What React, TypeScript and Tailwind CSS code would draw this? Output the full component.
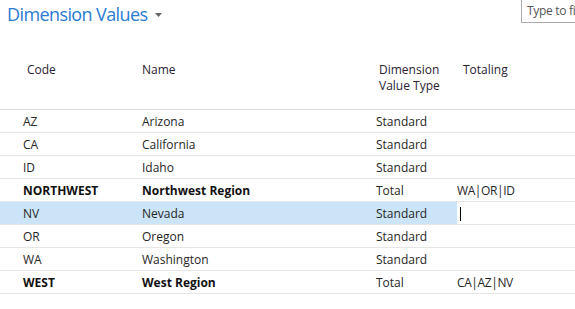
import React from "react";

interface Row {
  code: string;
  name: string;
  type: string;
  totaling: string;
  bold?: boolean;
  selected?: boolean;
}

const rows: Row[] = [
  { code: "AZ", name: "Arizona", type: "Standard", totaling: "" },
  { code: "CA", name: "California", type: "Standard", totaling: "" },
  { code: "ID", name: "Idaho", type: "Standard", totaling: "" },
  { code: "NORTHWEST", name: "Northwest Region", type: "Total", totaling: "WA|OR|ID", bold: true },
  { code: "NV", name: "Nevada", type: "Standard", totaling: "", selected: true },
  { code: "OR", name: "Oregon", type: "Standard", totaling: "" },
  { code: "WA", name: "Washington", type: "Standard", totaling: "" },
  { code: "WEST", name: "West Region", type: "Total", totaling: "CA|AZ|NV", bold: true },
];

const grid = "grid grid-cols-[142px_234px_81px_1fr]";

export default function App() {
  return (
    <div
      className="w-[575px] h-[309px] bg-white overflow-hidden text-[12px] text-[#262626]"
      style={{ fontFamily: '"Open Sans", "Noto Sans", sans-serif' }}
    >
      <div className="flex items-start h-[30px]">
        <div className="flex items-center pl-[7px] pt-[2px]">
          <h1 className="text-[18px] leading-[24px] text-[#2a7bd2] font-normal tracking-[-0.6px]">
            Dimension Values
          </h1>
          <svg className="ml-[8px] mt-[1px]" width="7" height="4" viewBox="0 0 7 4">
            <path d="M0 0H7L3.5 4Z" fill="#666" />
          </svg>
        </div>
        <div className="ml-auto mt-[-2px] w-[54px] h-[25px] border border-r-0 border-[#ababab] pl-[5px] pt-[4px] text-[12px] leading-[16px] tracking-[-0.3px] text-[#555] whitespace-nowrap overflow-hidden">
          Type to filter
        </div>
      </div>

      <div className={`${grid} h-[80px] pt-[32px] border-b border-[#dcdcdc] text-[#2a2233] leading-[16px]`}>
        <div className="pl-[27px]">Code</div>
        <div>Name</div>
        <div className="pl-[3px]">
          Dimension
          <br />
          Value Type
        </div>
        <div className="pl-[6px]">Totaling</div>
      </div>

      {rows.map((r) => (
        <div
          key={r.code}
          className={`${grid} h-[23px] border-b border-[#e6e6e6] leading-[21px]`}
        >
          <div className={`pl-[23px] pt-[1px] ${r.bold ? "font-bold text-[#111]" : ""} ${r.selected ? "bg-[#cce4f7]" : ""}`}>
            {r.code}
          </div>
          <div className={`pt-[1px] ${r.bold ? "font-bold text-[#111]" : ""} ${r.selected ? "bg-[#cce4f7]" : ""}`}>
            {r.name}
          </div>
          <div className={`pt-[1px] ${r.selected ? "bg-[#cce4f7]" : ""}`}>{r.type}</div>
          <div className="flex items-start pt-[1px] tracking-[-0.4px]">
            {r.selected ? <span className="ml-[3px] mt-[4px] w-px h-[14px] bg-black" /> : r.totaling}
          </div>
        </div>
      ))}
    </div>
  );
}
